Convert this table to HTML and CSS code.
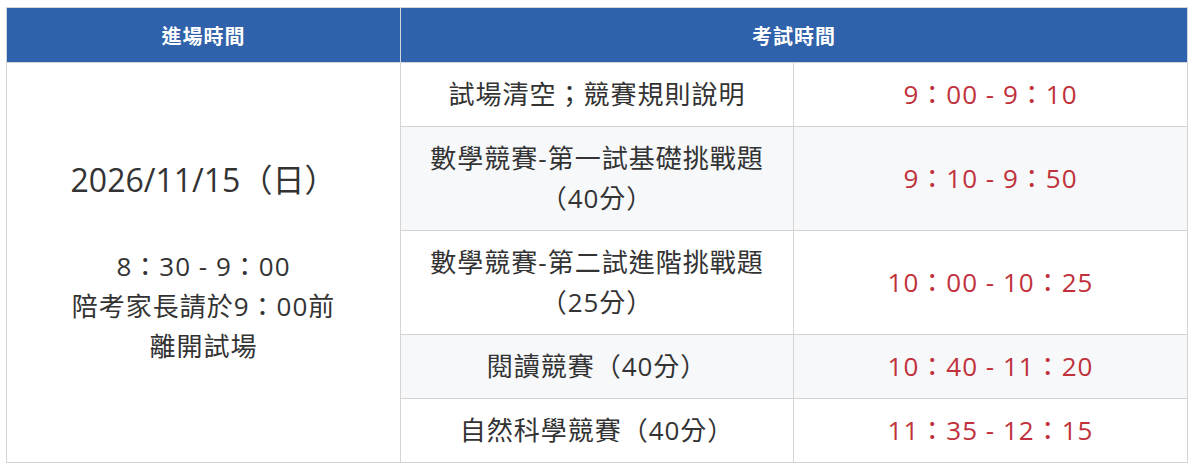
FILE: index.html
```html
<!DOCTYPE html>
<html lang="zh-Hant">
<head>
<meta charset="utf-8">
<title>競賽時程</title>
<link rel="stylesheet" href="styles.css">
</head>
<body>
<table class="schedule">
  <colgroup>
    <col class="col-entry">
    <col class="col-item">
    <col class="col-time">
  </colgroup>
  <thead>
    <tr>
      <th>進場時間</th>
      <th colspan="2">考試時間</th>
    </tr>
  </thead>
  <tbody>
    <tr>
      <td class="entry" rowspan="5">
        <div class="entry-date">2026/11/15（日）</div>
        <div class="entry-note">8：30 - 9：00<br>陪考家長請於9：00前<br>離開試場</div>
      </td>
      <td class="item">試場清空；競賽規則說明</td>
      <td class="time">9：00 - 9：10</td>
    </tr>
    <tr class="alt">
      <td class="item">數學競賽-第一試基礎挑戰題<br>（40分）</td>
      <td class="time">9：10 - 9：50</td>
    </tr>
    <tr>
      <td class="item">數學競賽-第二試進階挑戰題<br>（25分）</td>
      <td class="time">10：00 - 10：25</td>
    </tr>
    <tr class="alt">
      <td class="item">閱讀競賽（40分）</td>
      <td class="time">10：40 - 11：20</td>
    </tr>
    <tr>
      <td class="item">自然科學競賽（40分）</td>
      <td class="time">11：35 - 12：15</td>
    </tr>
  </tbody>
</table>
</body>
</html>
```

FILE: styles.css
```css
html, body {
  background: #ffffff;
}
body {
  margin: 7px 6px;
  font-family: "Open Sans", "Noto Sans CJK TC", sans-serif;
  color: #333333;
}
.schedule {
  width: 1181px;
  border-collapse: collapse;
  table-layout: fixed;
}
.col-entry { width: 394px; }
.col-item { width: 393px; }
.col-time { width: 394px; }

.schedule th {
  background: #2f62aa;
  color: #ffffff;
  font-family: "Noto Sans CJK TC", sans-serif;
  font-weight: 700;
  font-size: 20px;
  letter-spacing: 1px;
  height: 54px;
  padding: 0;
  border: 1px solid #d2d6dc;
  border-bottom: none;
  text-align: center;
  vertical-align: middle;
}
.schedule th + th {
  border-left: 1px solid #8aa6d0;
}
.schedule td {
  border: 1px solid #d4d4d4;
  text-align: center;
  vertical-align: middle;
  font-size: 26px;
  letter-spacing: 1px;
  line-height: 40px;
  padding: 11px 8px 12px;
}
.schedule tr.alt td.item,
.schedule tr.alt td.time {
  background: #f6f8fa;
}
.schedule td.entry {
  background: #ffffff;
}
.time {
  color: #c0313b;
}
.entry-date {
  font-size: 32px;
  letter-spacing: 0;
  line-height: 44px;
  margin-bottom: 44px;
}
.entry-note {
  font-size: 26px;
  line-height: 40px;
}
```
